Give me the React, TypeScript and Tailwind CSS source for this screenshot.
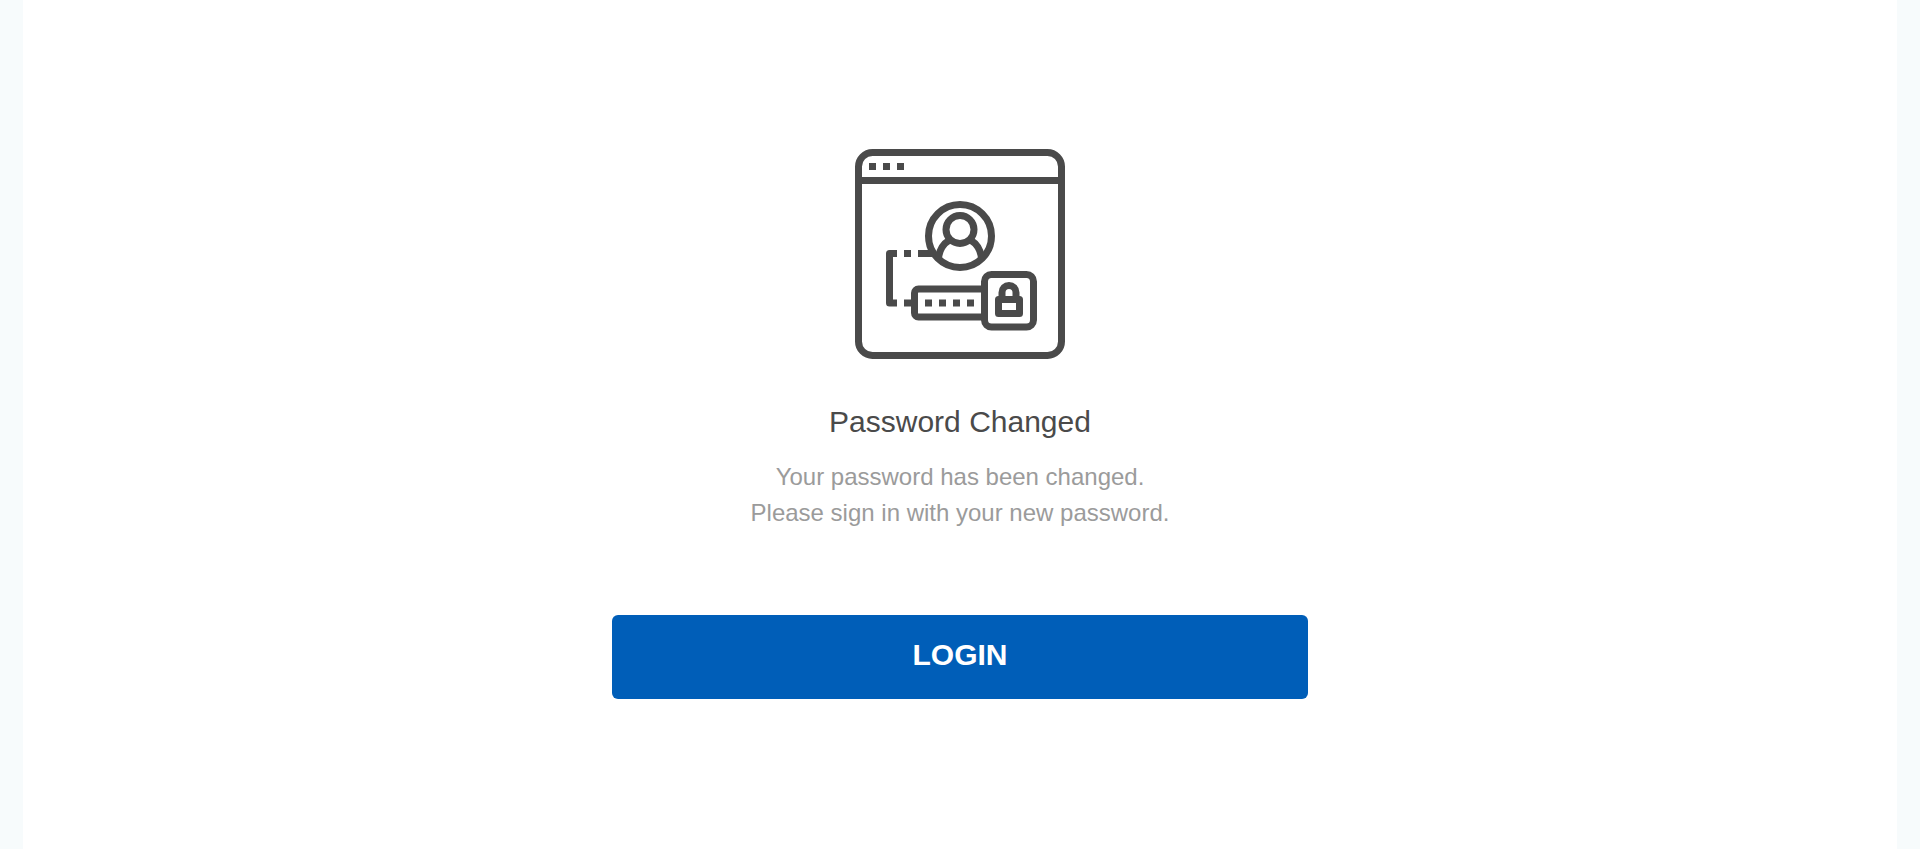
function PasswordIcon() {
  return (
    <svg
      className="size-[210px] text-[#4a4a4a]"
      viewBox="0 0 210 210"
      fill="none"
      stroke="currentColor"
      strokeWidth="7"
      aria-hidden="true"
    >
      <rect x="3.5" y="3.5" width="203" height="203" rx="14" />
      <path d="M3.5 31.5H206.5M14 17.5h7M28 17.5h7M42 17.5h7" />
      <circle cx="105" cy="87" r="31.5" />
      <circle cx="105" cy="80.5" r="14" />
      <path d="M94.500 91C88 95 84 101.500 83.500 110M115.500 91C122 95 126 101.500 126.500 110" />
      <path d="M42 104.500H34.500V154H42" strokeLinejoin="round" />
      <path d="M49 104.500h7M63 104.500h16M49 154h7M70 154h7M84 154h7M98 154h7M112 154h7" />
      <path d="M129.500 140H63.500a4 4 0 0 0-4 4v20a4 4 0 0 0 4 4h66" />
      <rect x="129.500" y="125.500" width="49" height="52.500" rx="7" />
      <rect x="143.500" y="150.500" width="21" height="14" strokeLinejoin="round" />
      <path d="M147 150.500V143.500a7 7 0 0 1 14 0v7" />
    </svg>
  );
}

export default function App() {
  return (
    <div className="min-h-screen bg-[#f7fbfc] px-[23px] font-['Liberation_Sans',Arial,sans-serif]">
      <main className="flex min-h-screen flex-col items-center bg-white px-4 pt-[149px] pb-16 text-center">
        <PasswordIcon />
        <h1 className="mt-[43px] text-[30px] leading-10 text-[#4a4a4a]">Password Changed</h1>
        <p className="mt-[17px] text-2xl leading-9 text-[#9b9b9b]">
          Your password has been changed.
          <br />
          Please sign in with your new password.
        </p>
        <button
          type="button"
          className="mt-[84px] h-21 w-full max-w-[696px] cursor-pointer rounded-md bg-[#005eb8] pb-1 text-[30px] leading-10 font-bold text-white"
        >
          LOGIN
        </button>
      </main>
    </div>
  );
}
